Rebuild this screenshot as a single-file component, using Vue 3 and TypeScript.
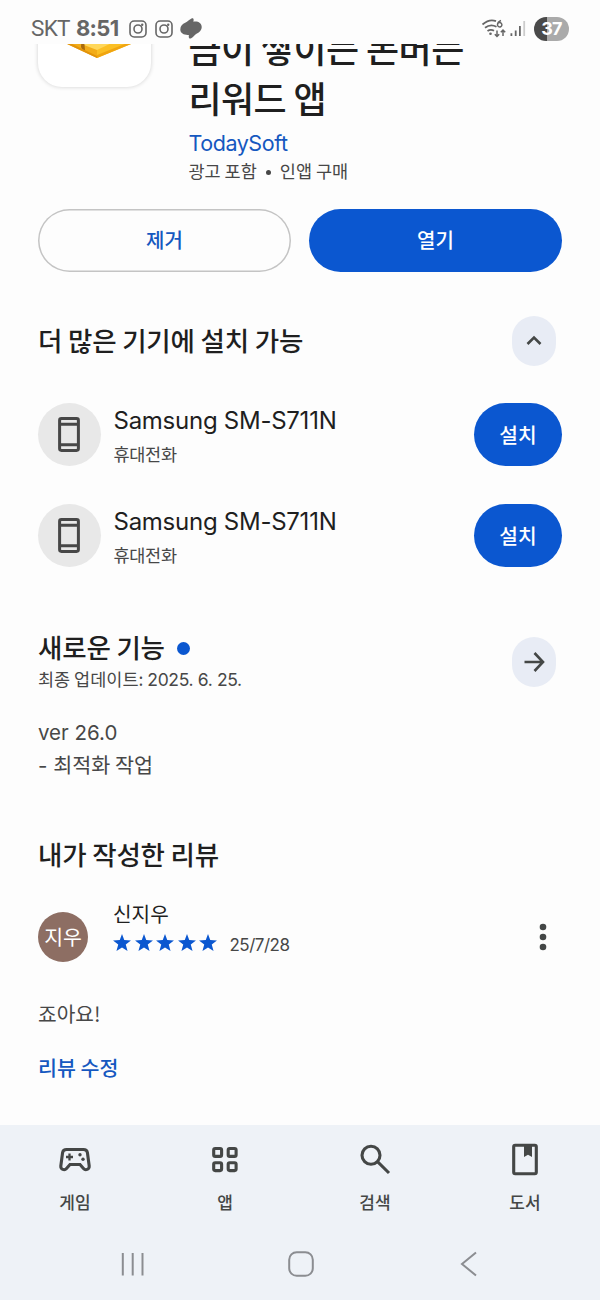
<script setup lang="ts">
interface Device { name: string; kind: string }
interface Tab { id: string; label: string }

const devices: Device[] = [
  { name: 'Samsung SM-S711N', kind: '휴대전화' },
  { name: 'Samsung SM-S711N', kind: '휴대전화' },
]
const tabs: Tab[] = [
  { id: 'games', label: '게임' },
  { id: 'apps', label: '앱' },
  { id: 'search', label: '검색' },
  { id: 'books', label: '도서' },
]
</script>

<template>
  <div class="screen">
    <header class="status">
      <span class="carrier">SKT</span>
      <span class="clock">8:51</span>
      <svg v-for="n in 2" :key="n" class="insta" viewBox="0 0 18 18">
        <rect x="1" y="1" width="16" height="16" rx="4.2" />
        <circle cx="9" cy="9" r="4" />
        <circle class="solid" cx="13.2" cy="4.8" r="1.2" />
      </svg>
      <svg class="blob" viewBox="0 0 22 21">
        <path d="M11.500 .4C13.500-.4 14 1 13.400 3.700C18 3 21.700 5 21.700 9C21.700 12.500 19 14.500 16.500 15.700C14.500 16.700 13.500 19 11.200 20.200C9.200 21.200 8.400 20 8.900 16.900C4.500 17.300 .3 15.500 .3 11.500C.3 8 2.500 6 5.200 4.800C7.800 3.700 9.300 1.300 11.500 .4Z" />
      </svg>
      <span class="gap"></span>
      <svg class="wifi" viewBox="0 0 26 20">
        <path d="M1.500 5.500Q8.500-.5 15 2.200M4 8.800Q9.500 4.500 15.500 7.800M6.500 12Q9.800 9.800 13 11.800" />
        <circle class="solid" cx="9.500" cy="14.700" r="1.300" />
        <path class="thin" d="M20 1.500Q16.500 2.800 16.500 6A2.200 2.200 0 1 0 16.700 4.800M16 11.500V17.500M13.800 15.300L16 17.500L18.200 15.300M22 17V11M19.800 13.200L22 11L24.200 13.200" />
      </svg>
      <svg class="signal" viewBox="0 0 16 17">
        <path d="M1.400 16V13.300M5.700 16V10.500M9.900 16V6" />
        <path class="faint" d="M14.200 16V1" />
      </svg>
      <span class="battery">37</span>
    </header>

    <main class="content">
      <section class="hero">
        <div class="app-icon">
          <svg viewBox="0 0 113 113">
            <path fill="#f2ac18" d="M8 60L59 84V66L8 44Z" />
            <path fill="#fbbf24" d="M59 84L110 63V46L59 74Z" />
            <path fill="#ffd75a" d="M46 66H80L59 76L46 71Z" />
            <path fill="#a8690a" d="M43.500 66H46L47 76L45 77L43 73Z" />
            <path fill="#e2930a" d="M28 69.500L59 84V82L30 68Z" />
            <path fill="#f0a510" d="M59 84L98 68V65.500L59 81Z" />
          </svg>
        </div>
        <div class="hero-text">
          <h1><span>금이 쌓이는 돈버는</span><br />리워드 앱</h1>
          <a class="developer">TodaySoft</a>
          <p class="meta">광고 포함 <i></i> 인앱 구매</p>
        </div>
      </section>

      <div class="actions">
        <button class="outline">제거</button>
        <button class="filled">열기</button>
      </div>

      <section class="section-head">
        <h2>더 많은 기기에 설치 가능</h2>
        <button class="round">
          <svg viewBox="0 0 24 24"><path d="M5.500 15L12 8.500L18.500 15" /></svg>
        </button>
      </section>

      <ul class="devices">
        <li v-for="(device, i) in devices" :key="i">
          <span class="device-icon">
            <svg viewBox="0 0 22 35">
              <rect x="1.600" y="1.600" width="18.800" height="31.800" rx="1.800" />
              <path d="M1.500 7.200H20.500M1.500 27.800H20.500" />
            </svg>
          </span>
          <div class="device-text">
            <strong>{{ device.name }}</strong>
            <small>{{ device.kind }}</small>
          </div>
          <button class="filled install">설치</button>
        </li>
      </ul>

      <section class="news">
        <div>
          <h2>새로운 기능 <i class="dot"></i></h2>
          <p class="updated">최종 업데이트: <span>2025. 6. 25.</span></p>
        </div>
        <button class="round">
          <svg viewBox="0 0 24 24"><path d="M2.500 12H20.500M12.500 3L21 12L12.500 21" /></svg>
        </button>
      </section>
      <div class="notes">
        <p class="version">ver 26.0</p>
        <p><span class="version">- </span>최적화 작업</p>
      </div>

      <h2 class="review-title">내가 작성한 리뷰</h2>
      <section class="review">
        <span class="avatar">지우</span>
        <div class="review-text">
          <p class="author">신지우</p>
          <div class="rating">
            <svg v-for="n in 5" :key="n" class="star" viewBox="0 0 20 19">
              <path d="M10 0L12.500 6.800L20 7.200L14.200 11.800L16.200 19L10 15L3.800 19L5.800 11.800L0 7.200L7.500 6.800Z" />
            </svg>
            <time>25/7/28</time>
          </div>
        </div>
        <svg class="more" viewBox="0 0 8 28">
          <circle cx="4" cy="4" r="3.300" /><circle cx="4" cy="14" r="3.300" /><circle cx="4" cy="24" r="3.300" />
        </svg>
      </section>
      <p class="comment">죠아요!</p>
      <a class="edit">리뷰 수정</a>
    </main>

    <nav class="tabs">
      <a v-for="tab in tabs" :key="tab.id">
        <svg viewBox="0 0 36 36">
          <g v-if="tab.id === 'games'">
            <path d="M9.500 7.500H26.500C28.500 7.500 30 8.700 30.400 10.500L32.200 24C32.500 27.500 28.500 28.800 26.500 26.500L23 22.500H13L9.500 26.500C7.500 28.800 3.500 27.500 3.800 24L5.600 10.500C6 8.700 7.500 7.500 9.500 7.500Z" />
            <path class="cross" d="M12.500 11.500V18.500M9 15H16" />
            <circle class="solid" cx="23" cy="12.800" r="1.700" /><circle class="solid" cx="26" cy="17.300" r="1.700" />
          </g>
          <g v-else-if="tab.id === 'apps'">
            <rect x="6.700" y="6.500" width="7.900" height="7.900" rx="1.500" /><rect x="21.200" y="6.500" width="7.900" height="7.900" rx="1.500" />
            <rect x="6.700" y="20.700" width="7.900" height="7.900" rx="1.500" /><rect x="21.200" y="20.700" width="7.900" height="7.900" rx="1.500" />
          </g>
          <g v-else-if="tab.id === 'search'">
            <circle cx="14" cy="13.200" r="9" /><path d="M20.500 19.700L32 31" />
          </g>
          <g v-else>
            <rect x="6.700" y="3.300" width="22.600" height="28.400" rx="1.500" />
            <path class="solid" d="M17 3.500H25V15L21 12.800L17 15Z" />
          </g>
        </svg>
        <span>{{ tab.label }}</span>
      </a>
    </nav>

    <footer class="system">
      <svg viewBox="0 0 26 26"><path d="M2.800 2V24.500M12.700 2V24.500M22.500 2V24.500" /></svg>
      <svg viewBox="0 0 26 26"><rect x="1.200" y="1.200" width="23.600" height="23.600" rx="7.500" /></svg>
      <svg viewBox="0 0 26 26"><path d="M20 1.500L6 13L20 24.500" /></svg>
    </footer>
  </div>
</template>

<style>
body { margin: 0; background: #fdfdfd; }
</style>

<style scoped>
* { box-sizing: border-box; margin: 0; padding: 0; }
.screen { width: 600px; height: 1300px; display: flex; flex-direction: column; overflow: hidden; background: #fdfdfd; color: #1f1f1f; font-family: Inter, "Noto Sans CJK KR", sans-serif; }
h1, h2, .meta, .author, .comment, .edit, .notes, .updated, button, small, .avatar, .tabs { font-family: "Noto Sans CJK KR", sans-serif; white-space: nowrap; }
svg { display: block; flex: none; fill: none; stroke: currentColor; }
.solid { fill: currentColor; stroke: none; }
button { border: 0; flex: none; display: flex; align-items: center; justify-content: center; }

.status { height: 44px; flex: none; display: flex; align-items: center; padding: 13px 31px 0 31px; color: #666; }
.carrier { font: 22.500px/28px Roboto, sans-serif; width: 45px; letter-spacing: -0.700px; margin-top: -1px; }
.clock { font: 700 22px/28px Inter, sans-serif; width: 53px; letter-spacing: -0.700px; margin-top: -1px; }
.insta { width: 18px; height: 18px; margin-right: 8px; stroke-width: 1.6; }
.blob { width: 22px; height: 21px; margin-left: -1px; fill: currentColor; stroke: none; }
.gap { flex: 1; }
.wifi { width: 26px; height: 20px; stroke-width: 1.8; margin-right: 3px; }
.wifi .thin { stroke-width: 1.5; }
.signal { width: 16px; height: 17px; margin-right: 8px; stroke-width: 1.8; }
.faint { stroke: #ccc; }
.battery { width: 35px; height: 24px; border-radius: 12px; background: linear-gradient(90deg, #4a4a4a 37%, #aaa 37%); color: #fff; font: 700 18px/24px Inter, sans-serif; text-align: center; letter-spacing: -0.8px; }

.content { height: 1081px; flex: none; overflow: hidden; padding: 0 38px; display: flex; flex-direction: column; }
.hero { display: flex; margin-top: -70px; flex: none; height: 235px; gap: 37.500px; }
.app-icon { width: 113px; height: 113px; border-radius: 24px; background: #fff; box-shadow: 0 0 4px rgba(0, 0, 0, .18); flex: none; }
.app-icon svg { stroke: none; width: 113px; height: 113px; }
.hero-text { padding-top: 48px; }
h1 { font-size: 36px; line-height: 50px; font-weight: 500; letter-spacing: -0.6px; }
.developer { display: block; margin-top: 7px; font-size: 21.500px; line-height: 28px; color: #1558c0; letter-spacing: -0.45px; }
.meta { display: flex; align-items: center; font-size: 17.500px; line-height: 28px; color: #474747; }
.meta i { width: 5px; height: 5px; border-radius: 50%; background: #474747; margin: 2px 9px 0; }

.actions { display: flex; gap: 18px; flex: none; }
.actions button { height: 62.500px; width: 253px; border-radius: 32px; font-size: 20px; line-height: 28px; font-weight: 500; }
.actions .outline { background: transparent; box-shadow: inset 0 0 0 1.500px #c4c4c4; color: #1558c0; }
.filled { background: #0b57d0; color: #fff; }

.section-head { margin-top: 44.500px; height: 50px; flex: none; display: flex; align-items: center; justify-content: space-between; padding-right: 6px; }
.section-head h2 { padding-bottom: 3px; }
h2 { font-size: 26.500px; line-height: 34px; font-weight: 500; letter-spacing: -0.180px; }
.round { width: 44px; height: 50px; border-radius: 22px; background: #e8ecf5; color: #444746; }
.round svg { width: 24px; height: 24px; stroke-width: 2.600; }

.devices { list-style: none; margin-top: 37px; flex: none; }
.devices li { display: flex; height: 63px; margin-bottom: 38px; }
.device-icon { width: 63px; height: 63px; border-radius: 50%; background: #e8e8e8; color: #474747; display: flex; align-items: center; justify-content: center; flex: none; }
.device-icon svg { width: 22px; height: 35px; stroke-width: 3; margin-right: 1px; }
.device-text { flex: 1; margin-left: 12.500px; display: flex; flex-direction: column; }
.device-text strong { font-weight: 400; font-size: 24px; line-height: 36px; white-space: nowrap; letter-spacing: -0.260px; }
small { font-size: 17.500px; line-height: 26px; margin-top: 1.500px; color: #474747; letter-spacing: -0.3px; }
.install { width: 88px; height: 63px; border-radius: 32px; font-size: 20.300px; font-weight: 500; padding-bottom: 2px; }

.news { margin-top: 25px; height: 66px; flex: none; display: flex; justify-content: space-between; padding-right: 6px; }
.news .round { margin-top: 7px; }
.dot { display: inline-block; width: 13px; height: 13px; border-radius: 50%; background: #0b57d0; margin-left: 6px; vertical-align: 3px; }
.updated { font-size: 17.500px; line-height: 30px; color: #474747; }
.updated span { letter-spacing: -0.350px; }
.notes { margin-top: 21px; height: 64px; font-size: 20.700px; line-height: 32px; color: #474747; flex: none; }
.notes p { height: 32px; }
.notes p + p { line-height: 30px; }
.version, .updated span { font-family: Inter, sans-serif; }
.notes .version { font-size: 20.500px; }
.review-title { margin-top: 56px; flex: none; }
.review { display: flex; height: 66px; margin-top: 29px; flex: none; }
.avatar { width: 50px; height: 50px; border-radius: 50%; background: #8d6e63; color: #fff; margin-top: 12px; font-size: 20.500px; line-height: 49px; text-align: center; flex: none; }
.review-text { margin-left: 25px; flex: 1; }
.author { font-size: 20.200px; line-height: 28px; }
.rating { display: flex; align-items: center; height: 28px; color: #0b57d0; }
.star { width: 18px; height: 17px; margin-right: 3.500px; fill: currentColor; stroke: none; }
time { margin: 6px 0 0 9px; color: #474747; font-size: 17px; line-height: 20px; letter-spacing: -0.5px; }
.more { width: 8px; height: 28px; margin: 23px 15px 0 0; color: #444746; fill: currentColor; stroke: none; }
.comment { margin-top: 33px; font-size: 20.300px; line-height: 28px; color: #474747; flex: none; }
.edit { margin-top: 26px; font-size: 20.600px; line-height: 28px; font-weight: 500; color: #1558c0; }

.tabs { height: 104px; flex: none; background: #eef2f7; display: grid; grid-template-columns: repeat(4, 150px); color: #444746; }
.tabs a { display: flex; flex-direction: column; align-items: center; padding-top: 17px; }
.tabs svg { width: 36px; height: 36px; stroke-width: 3.100; }
.tabs .cross { stroke-width: 2.300; }
.tabs span { font-size: 17px; line-height: 24px; margin-top: 12px; font-weight: 500; }
.system { height: 71px; flex: none; background: #eef2f7; display: flex; justify-content: space-between; padding: 22px 118px 0 120px; color: #8b8d91; }
.system svg { width: 26px; height: 26px; stroke-width: 2; }
</style>
